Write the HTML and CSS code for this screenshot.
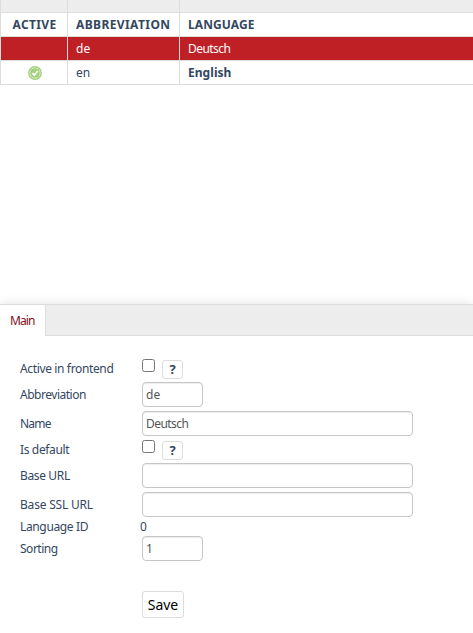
FILE: index.html
```html
<!DOCTYPE html>
<html lang="en">
<head>
<meta charset="utf-8">
<title>Languages</title>
<link rel="stylesheet" href="styles.css">
</head>
<body>
<main class="page">
<section class="list">
<div class="row row-top"><div></div><div></div><div></div></div>
<div class="row row-head"><div><span class="h-active">ACTIVE</span></div><div><span class="h-abbr">ABBREVIATION</span></div><div><span class="h-lang">LANGUAGE</span></div></div>
<div class="row row-selected"><div></div><div><span>de</span></div><div><span class="deutsch">Deutsch</span></div></div>
<div class="row"><div><svg class="check" viewBox="0 0 14 14"><circle cx="7" cy="7" r="6.9" fill="#a3d07b"/><circle cx="7" cy="7" r="5.2" fill="none" stroke="#d3eabf" stroke-width="1"/><path d="M4.4 7.1 6.4 9.1 9.8 5" fill="none" stroke="#fff" stroke-width="1.8"/></svg></div><div><span>en</span></div><div><span class="english">English</span></div></div>
</section>
<section class="detail">
<nav class="tabs"><a class="tab">Main</a></nav>
<form class="form">
<div class="field short"><label class="l1">Active in frontend</label><input type="checkbox"><button type="button" class="help">?</button></div>
<div class="field"><label class="l2">Abbreviation</label><div class="box small">de</div></div>
<div class="field"><label class="l3">Name</label><div class="box"><span class="deutsch">Deutsch</span></div></div>
<div class="field short"><label class="l4">Is default</label><input type="checkbox"><button type="button" class="help">?</button></div>
<div class="field"><label class="l5">Base URL</label><div class="box"></div></div>
<div class="field"><label class="l6">Base SSL URL</label><div class="box"></div></div>
<div class="field plain"><label class="l7">Language ID</label><span class="value">0</span></div>
<div class="field"><label class="l8">Sorting</label><div class="box small">1</div></div>
<button type="button" class="save">Save</button>
</form>
</section>
</main>
</body>
</html>
```
FILE: styles.css
```css
* { box-sizing: border-box; }
body { margin: 0; background: #fff; color: #33475f; font: 12px/16px "Noto Sans", sans-serif; overflow: hidden; }
.page { height: 633px; display: flex; flex-direction: column; }
.list { height: 304px; flex: none; }
.row { display: grid; grid-template-columns: 67px 112px 1fr; height: 24px; border-bottom: 1px solid #dcdcdc; border-left: 1px solid #dcdcdc; }
.row > div { display: flex; align-items: center; padding-left: 8px; white-space: nowrap; }
.row > div:nth-child(-n+2) { border-right: 1px solid #dcdcdc; }
.row > div:first-child { justify-content: center; padding: 0 0 0 1px; }
.row-top { height: 13px; background: #ededed; }
.row-head { font-weight: 700; }
.row-selected { background: #be2026; background-clip: padding-box; color: #fff; }
.h-active { letter-spacing: .35px; }
.h-abbr { letter-spacing: .4px; }
.h-lang { letter-spacing: .08px; }
.deutsch { letter-spacing: -.55px; }
.check { width: 14px; height: 14px; }
.english { font-weight: 700; letter-spacing: .05px; }
.detail { flex: 1; box-shadow: 0 0 10px rgba(0,0,0,.12); border-top: 1px solid #dcdcdc; }
.tabs { height: 31px; background: #ededed; border-bottom: 1px solid #dcdcdc; display: flex; }
.tab { width: 46px; height: 31px; padding: 8px 0 0 10px; background: #fff; border-right: 1px solid #dcdcdc; color: #85101a; letter-spacing: -.9px; }
.form { padding: 21px 0 0 20px; }
.field { display: flex; align-items: center; height: 29px; }
.field label { width: 122px; flex: none; white-space: nowrap; letter-spacing: -.36px; }
.field .l2, .field .l8 { letter-spacing: -.48px; }
.field .l3 { letter-spacing: -.8px; }
.field .l6 { letter-spacing: -.2px; }
.short { height: 23px; }
.plain { height: 15px; }
.value { margin-left: -2px; }
input { width: 13px; height: 13px; margin: 0 7px 7px 0; }
.help { width: 21px; height: 19px; margin-top: 1px; padding: 0; border: 1px solid #dcdcdc; border-radius: 3px; background: #fff; color: #33475f; font: 700 13px/16px "Noto Sans", sans-serif; }
.box { width: 271px; height: 25px; border: 1px solid #c6c6c6; border-radius: 4px; padding: 4px 0 0 3px; color: #555; box-shadow: inset 0 1px 1px rgba(0,0,0,.07); line-height: 16px; }
.small { width: 61px; }
.save { display: block; margin: 28px 0 0 122px; width: 42px; height: 27px; padding: 0; border: 1px solid #dcdcdc; border-radius: 3px; background: #fff; color: #000; font: 14px/20px "Noto Sans", sans-serif; }
```
